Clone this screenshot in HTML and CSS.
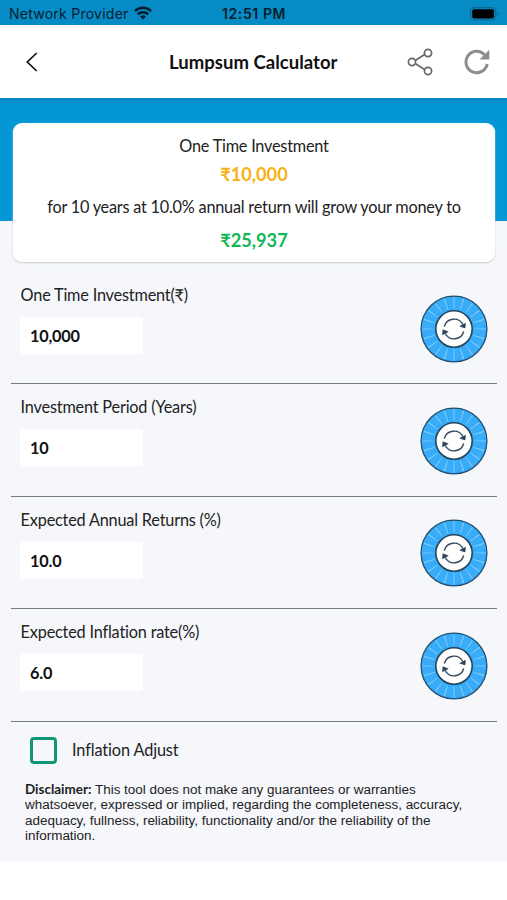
FILE: index.html
```html
<!DOCTYPE html>
<html lang="en">
<head>
<meta charset="utf-8">
<title>Lumpsum Calculator</title>
<link rel="stylesheet" href="styles.css">
</head>
<body>
<svg class="defs" aria-hidden="true">
  <symbol id="dial" viewBox="0 0 68 68">
    <circle cx="34" cy="34" r="32.9" fill="#38acf9" stroke="#24506f" stroke-width="1.3"/>
    <circle cx="34" cy="34" r="26" fill="none" stroke="#86ccf8" stroke-width="11" pathLength="200" stroke-dasharray="1.2 8.8" stroke-dashoffset="0.6"/>
    <circle cx="34" cy="34" r="18.2" fill="#fff" stroke="#24445c" stroke-width="1.6"/>
    <g fill="none" stroke="#34495e" stroke-width="1.4">
      <path d="M24.3 31.5a10 10 0 0 1 18.5-2"/>
      <path d="M43.7 36.5a10 10 0 0 1-18.5 2"/>
    </g>
    <path d="M39.8 31.3l5.6-3-.3 4.6z" fill="#2c4257" stroke="#2c4257" stroke-width=".6"/>
    <path d="M28.2 36.7l-5.6 3 .3-4.9z" fill="#2c4257" stroke="#2c4257" stroke-width=".6"/>
  </symbol>
</svg>
<header class="status">
  <span class="carrier">Network Provider</span>
  <svg class="wifi" viewBox="0 0 18 14"><g fill="none" stroke="#04202e" stroke-width="2.5"><path d="M.9 5.1a11.6 11.6 0 0 1 16.2 0"/><path d="M3.8 8.3a7.4 7.4 0 0 1 10.4 0"/></g><path d="M9 13.5L6.1 10.6a4.1 4.1 0 0 1 5.8 0z" fill="#04202e"/></svg>
  <span class="time">12:51 PM</span>
  <svg class="battery" viewBox="0 0 30 14"><rect x=".6" y=".6" width="25" height="12.4" rx="3.6" fill="none" stroke="#066894" stroke-width="1.1"/><rect x="2.2" y="2.2" width="21.8" height="9.2" rx="2" fill="#000"/><path d="M27 4.8c2 .5 2 3.6 0 4.2z" fill="#066894"/></svg>
</header>
<nav class="bar">
  <svg class="back" viewBox="0 0 12 20"><path d="M10.7 1L1.3 10l9.4 9" fill="none" stroke="#111" stroke-width="1.7"/></svg>
  <h1 class="title">Lumpsum Calculator</h1>
  <svg class="share" viewBox="0 0 26 28"><g fill="none" stroke="#686868" stroke-width="1.7"><path d="M8.5 12.2l9.2-5.6M8.5 15.8l9.2 5.6"/><circle cx="5" cy="14" r="3.6"/><circle cx="21" cy="5" r="3.6"/><circle cx="21" cy="23" r="3.6"/></g></svg>
  <svg class="reload" viewBox="0 0 26 26"><path d="M20.5 5.7A10.7 10.7 0 1 0 23.2 15" fill="none" stroke="#8d8d8d" stroke-width="3"/><path d="M25.3 .8v9.8h-9.8z" fill="#8d8d8d"/></svg>
</nav>
<main class="content">
  <section class="hero">
    <div class="card">
      <p class="line">One Time Investment</p>
      <p class="amount invested">₹10,000</p>
      <p class="line">for 10 years at 10.0% annual return will grow your money to</p>
      <p class="amount grown">₹25,937</p>
    </div>
  </section>
  <section class="fields">
    <div class="field"><div class="entry"><label class="label">One Time Investment(₹)</label><div class="value">10,000</div></div><svg class="dial"><use href="#dial"/></svg></div>
    <div class="field"><div class="entry"><label class="label">Investment Period (Years)</label><div class="value">10</div></div><svg class="dial"><use href="#dial"/></svg></div>
    <div class="field"><div class="entry"><label class="label">Expected Annual Returns (%)</label><div class="value">10.0</div></div><svg class="dial"><use href="#dial"/></svg></div>
    <div class="field"><div class="entry"><label class="label">Expected Inflation rate(%)</label><div class="value">6.0</div></div><svg class="dial"><use href="#dial"/></svg></div>
  </section>
  <div class="adjust"><span class="box"></span><span class="adjust-label">Inflation Adjust</span></div>
  <p class="disclaimer"><b>Disclaimer:</b> This tool does not make any guarantees or warranties<br>whatsoever, expressed or implied, regarding the completeness, accuracy,<br>adequacy, fullness, reliability, functionality and/or the reliability of the<br>information.</p>
</main>
</body>
</html>
```
FILE: styles.css
```css
* { box-sizing: border-box; margin: 0; padding: 0; }
body { width: 507px; height: 900px; overflow: hidden; background: #fff; font-family: Lato, "Noto Sans", sans-serif; color: #222; }
.defs { position: absolute; width: 0; height: 0; }
.status { height: 25px; background: #078bc5; display: grid; grid-template-columns: 125px 88px 1fr auto; align-items: center; padding: 2px 7px 0 9px; font-family: Inter, sans-serif; font-size: 14px; color: #04202e; white-space: nowrap; }
.carrier { letter-spacing: .25px; }
.wifi { width: 18px; height: 14px; margin-bottom: 1px; }
.time { font-weight: 600; letter-spacing: .6px; }
.battery { width: 30px; height: 14px; }
.bar { height: 73px; display: grid; grid-template-columns: 143px 238px 57px 26px; align-items: center; padding-left: 26px; }
.back { width: 12px; height: 20px; }
.title { font-size: 18.5px; font-weight: 700; line-height: 24px; color: #111; white-space: nowrap; letter-spacing: .03px; }
.share { width: 26px; height: 28px; }
.reload { width: 26px; height: 26px; }
.content { height: 764px; background: #f5f7fb; }
.hero { height: 181px; padding: 25px 12px 0 13px; background: linear-gradient(#0789c3 0, #0596d5 7px, #0596d5 123px, #f5f7fb 123px); }
.card { height: 139px; border-radius: 9px; background: #fff; box-shadow: 0 1px 2px #c8cbcf; display: flex; flex-direction: column; align-items: center; padding-top: 12px; white-space: nowrap; }
.line { font-size: 16.3px; line-height: 22px; letter-spacing: -.23px; }
.amount { font-size: 18.2px; font-weight: 700; line-height: 24px; letter-spacing: -.03px; }
.invested { color: #f9b013; margin: 5px 0 10px; }
.grown { color: #13b755; margin-top: 10px; }
.fields { padding: 0 10px 0 11px; }
.field { height: 112.4px; border-bottom: 1px solid #777b80; display: flex; justify-content: space-between; padding: 12px 9px 0; }
.field:first-child { height: 105.4px; padding-top: 5px; }
.label { display: block; padding-left: .6px; font-size: 16.3px; line-height: 22px; white-space: nowrap; letter-spacing: -.2px; }
.value { margin-top: 11px; width: 123px; height: 37px; border-radius: 3px; background: #fff; padding: 0 10px; font-size: 16.3px; line-height: 38px; font-weight: 700; letter-spacing: -.2px; color: #111; }
.dial { width: 68px; height: 68px; margin-top: 10.5px; }
.adjust { display: flex; align-items: center; padding: 15px 0 0 30px; gap: 15px; }
.box { width: 27px; height: 27px; border: 3px solid #119777; border-radius: 4px; }
.adjust-label { font-size: 16.3px; line-height: 24px; letter-spacing: -.12px; }
.disclaimer { margin: 18.5px 0 0 25px; font-family: "Liberation Sans", sans-serif; font-size: 13.46px; line-height: 15.3px; white-space: nowrap; }
.disclaimer b { font-family: Lato, sans-serif; }
```
